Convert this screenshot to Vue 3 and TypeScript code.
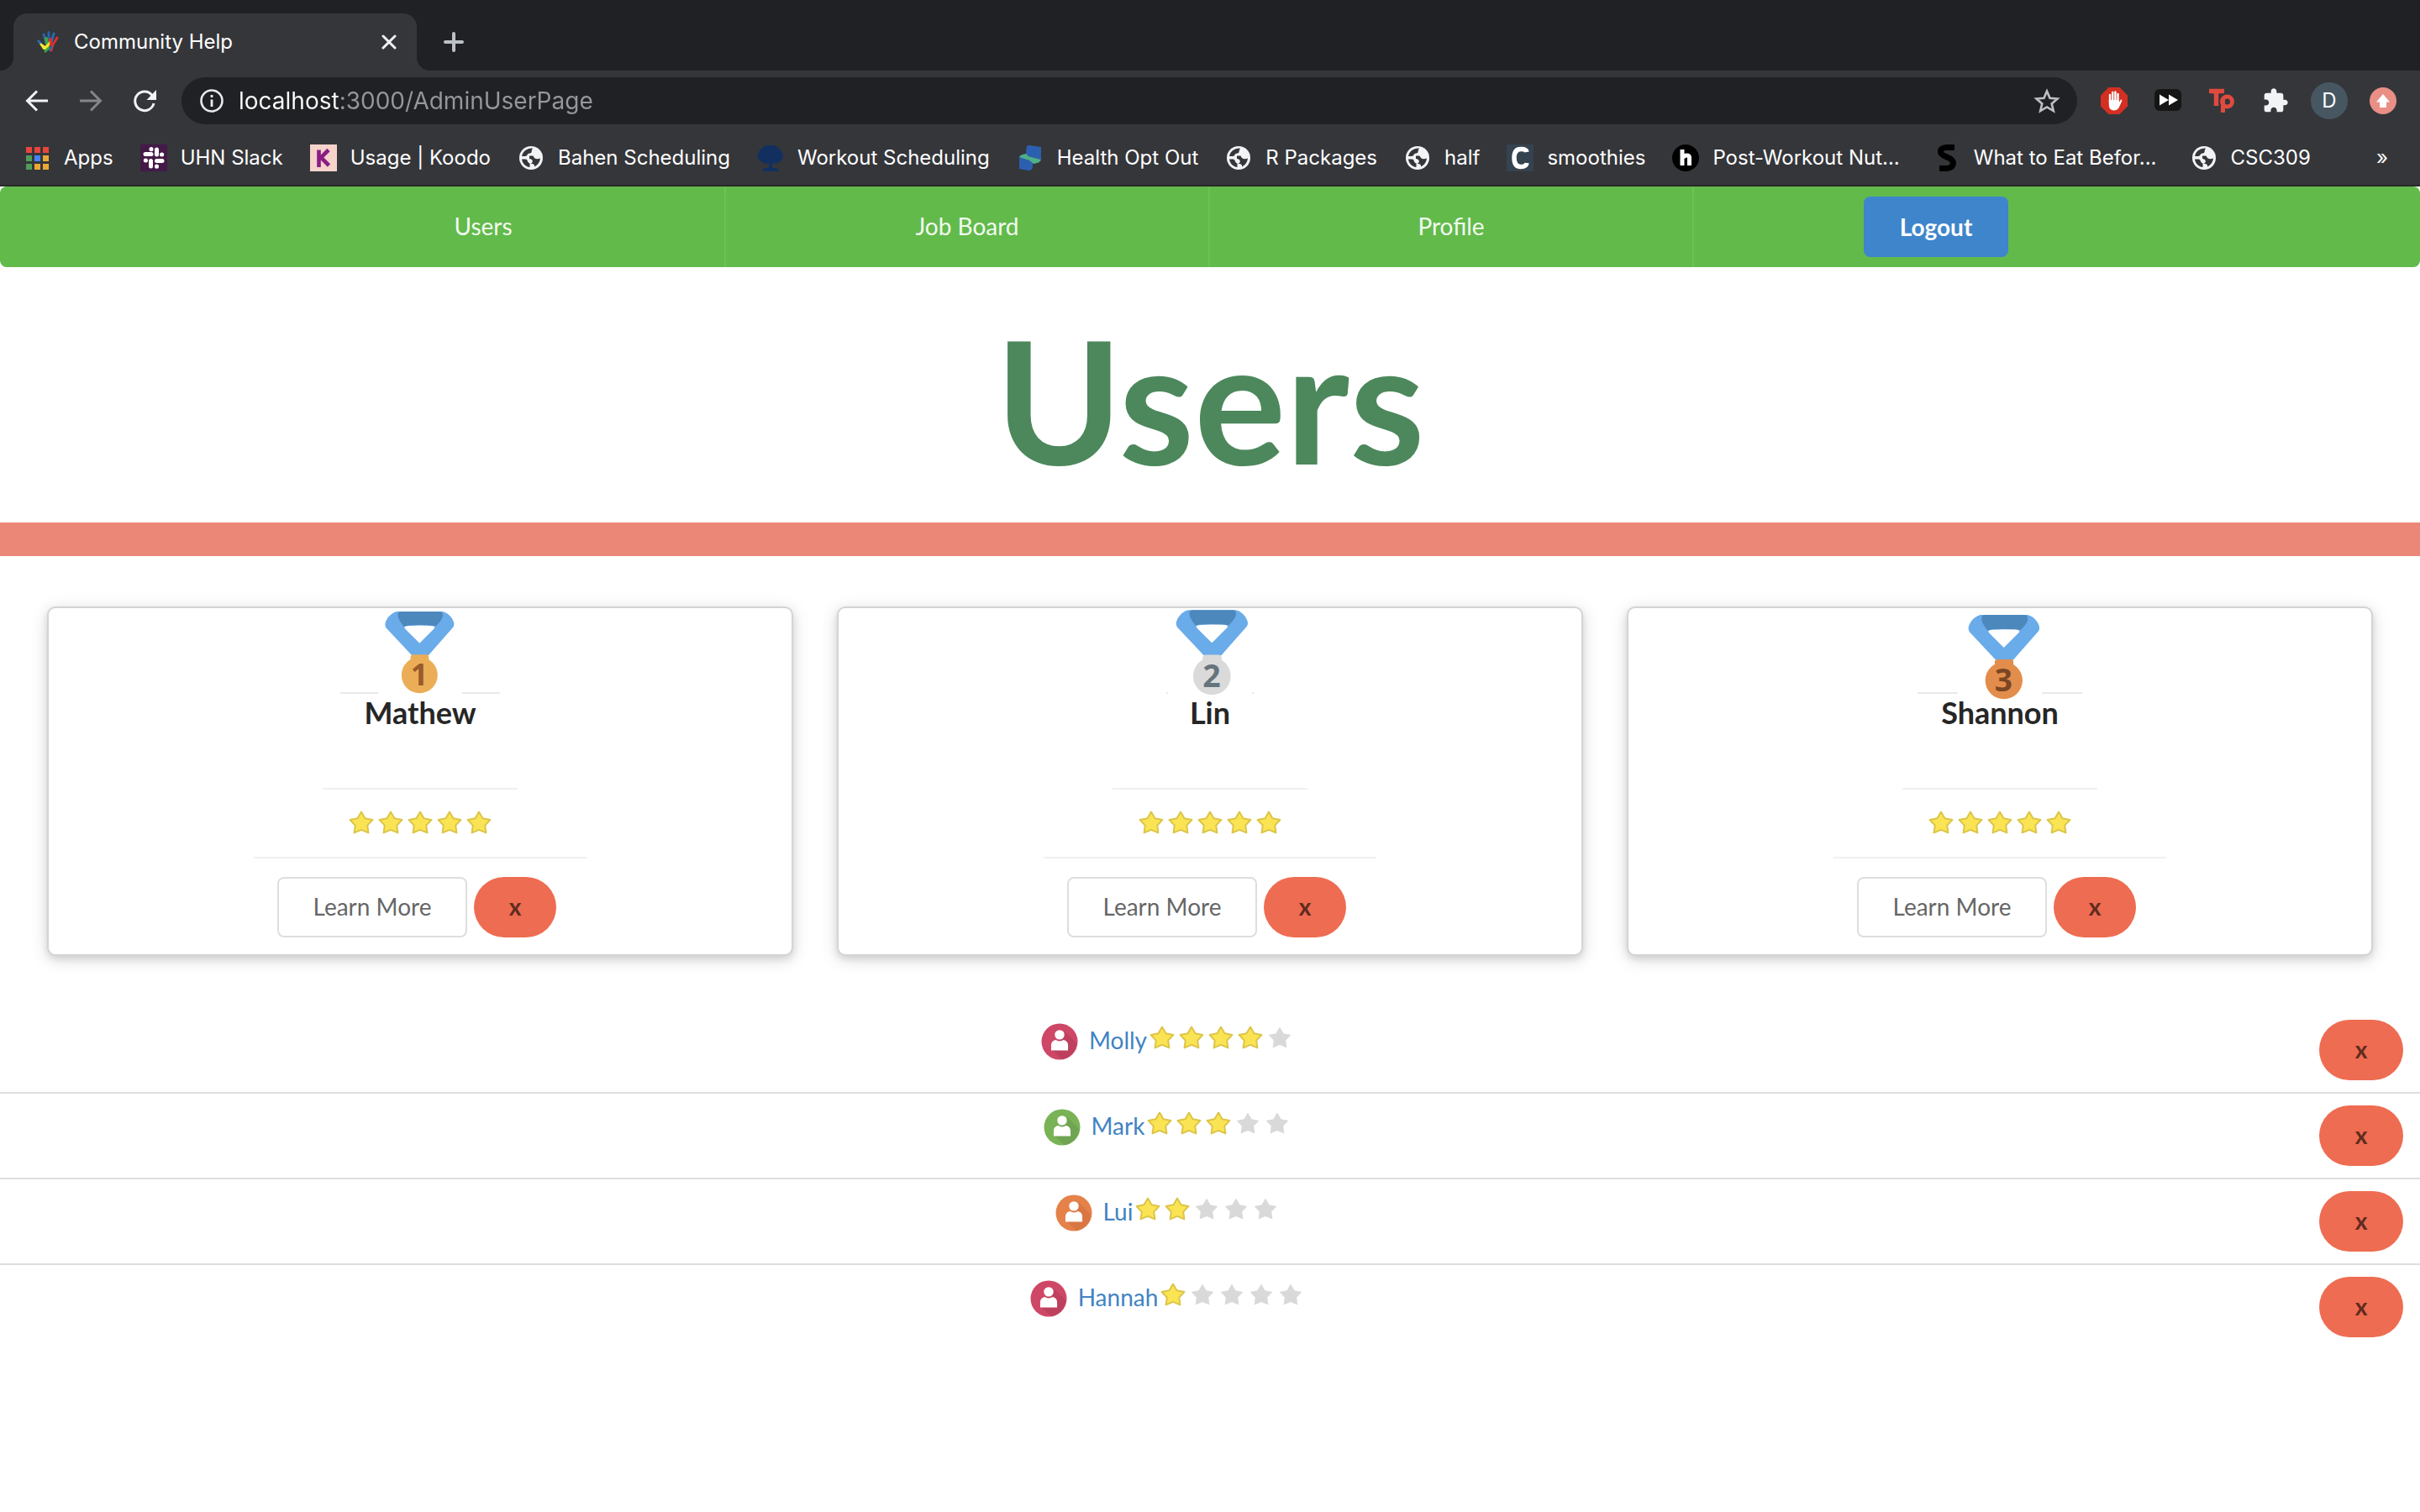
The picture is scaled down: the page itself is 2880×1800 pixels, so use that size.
<script setup lang="ts">
interface Bookmark {
  label: string
  icon: string
}

interface Leader {
  name: string
  place: number
  transform: string
  metal: string
  digit: string
}

interface Person {
  name: string
  rating: number
  color: string
  shade: string
}

const bookmarks: Bookmark[] = [
  { label: 'Apps', icon: 'apps' },
  { label: 'UHN Slack', icon: 'slack' },
  { label: 'Usage | Koodo', icon: 'koodo' },
  { label: 'Bahen Scheduling', icon: 'globe' },
  { label: 'Workout Scheduling', icon: 'tree' },
  { label: 'Health Opt Out', icon: 'health' },
  { label: 'R Packages', icon: 'globe' },
  { label: 'half', icon: 'globe' },
  { label: 'smoothies', icon: 'smoothies' },
  { label: 'Post-Workout Nut...', icon: 'post' },
  { label: 'What to Eat Befor...', icon: 'eat' },
  { label: 'CSC309', icon: 'globe' },
]

const leaders: Leader[] = [
  { name: 'Mathew', place: 1, transform: '', metal: '#ebae57', digit: '#9a5a2c' },
  { name: 'Lin', place: 2, transform: 'translate(1 -2) scale(1.04)', metal: '#dadada', digit: '#66747c' },
  { name: 'Shannon', place: 3, transform: 'translate(4 4) scale(1.03)', metal: '#e38d4c', digit: '#7a4623' },
]

const people: Person[] = [
  { name: 'Molly', rating: 4, color: '#cf4766', shade: '#bd415e' },
  { name: 'Mark', rating: 3, color: '#79b356', shade: '#6fa453' },
  { name: 'Lui', rating: 2, color: '#e4824a', shade: '#da7644' },
  { name: 'Hannah', rating: 1, color: '#cf4766', shade: '#bd415e' },
]

const starPoints =
  '15,1.6 19.5,9.2 28.4,11 22.2,17.6 23.4,26.4 15,22.9 6.6,26.4 7.8,17.6 1.6,11 10.5,9.2'
const url = 'localhost:3000/AdminUserPage'
</script>

<template>
  <div class="window">
    <header class="chrome">
      <div class="tabs">
        <div class="tab">
          <svg class="favicon" viewBox="0 0 26 26" fill="none" stroke-linecap="round">
            <path d="M2 12 L7 18" stroke="#2a6bb0" stroke-width="3" />
            <path d="M8 4 L11 14 M14 1.5 L14 13" stroke="#2465a8" stroke-width="3" />
            <path d="M20 3 L17 13" stroke="#2a6bb0" stroke-width="3" />
            <path d="M11 9 L12 15" stroke="#3fa34a" stroke-width="4" />
            <path d="M16 10 L16 16" stroke="#d6322d" stroke-width="4" />
            <path d="M24 8 L19 16 L17 23" stroke="#d6322d" stroke-width="3" />
            <path d="M4 15 L10 19 L14 15 L13 21 L8 21 Z" fill="#f3ea2c" stroke="#f3ea2c" stroke-width="2" />
            <path d="M10 24 L14 20" stroke="#3fa34a" stroke-width="3" />
            <path d="M15 23 L18 18" stroke="#2a6bb0" stroke-width="2" />
          </svg>
          <span class="tab-title">Community Help</span>
          <button class="icon-button close" aria-label="Close tab">
            <svg viewBox="0 0 18 18" stroke="#f1f3f4" stroke-width="3" stroke-linecap="round">
              <path d="M2 2 L16 16 M16 2 L2 16" />
            </svg>
          </button>
        </div>
        <button class="icon-button new-tab" aria-label="New tab">
          <svg viewBox="0 0 24 24" stroke="#bdc1c6" stroke-width="4" stroke-linecap="round">
            <path d="M12 2 V22 M2 12 H22" />
          </svg>
        </button>
      </div>

      <div class="toolbar">
        <div class="history">
          <button class="icon-button" aria-label="Back">
            <svg viewBox="0 0 32 32" fill="none" stroke="#f1f3f4" stroke-width="3">
              <path d="M29 16 H5 M16 4.5 L4.5 16 L16 27.5" />
            </svg>
          </button>
          <button class="icon-button" aria-label="Forward">
            <svg viewBox="0 0 32 32" fill="none" stroke="#858689" stroke-width="3">
              <path d="M3 16 H27 M16 4.5 L27.5 16 L16 27.5" />
            </svg>
          </button>
          <button class="icon-button" aria-label="Reload">
            <svg viewBox="0 0 32 32">
              <path d="M25 9.5 A11.3 11.3 0 1 0 27 19" fill="none" stroke="#f1f3f4" stroke-width="3" />
              <path d="M30 3 V15 H18.500 Z" fill="#f1f3f4" />
            </svg>
          </button>
        </div>
        <div class="omnibox">
          <svg class="info" viewBox="0 0 28 28" fill="none">
            <circle cx="14" cy="14" r="12.500" stroke="#e8eaed" stroke-width="2.600" />
            <path d="M14 12.500 V21 M14 7 V10" stroke="#e8eaed" stroke-width="2.800" />
          </svg>
          <input class="address" type="text" aria-label="Address" :value="url" />
          <button class="icon-button" aria-label="Bookmark this tab">
            <svg viewBox="0 0 32 32" fill="none" stroke="#bdc1c6" stroke-width="2.600">
              <path d="M16 4.500 L19.500 12.800 L28.500 13.500 L21.700 19.400 L23.800 28 L16 23.400 L8.200 28 L10.300 19.400 L3.500 13.500 L12.500 12.800 Z" />
            </svg>
          </button>
        </div>
        <div class="extensions">
          <button class="icon-button" aria-label="Ad blocker">
            <svg viewBox="0 0 32 32">
              <path d="M9.400 0 H22.600 L32 9.400 V22.600 L22.600 32 H9.400 L0 22.600 V9.400 Z" fill="#d42f22" />
              <path d="M11 9 V18 M14.200 6 V17 M17.400 5.500 V17 M20.500 8 V18" stroke="#fff" stroke-width="2.400" stroke-linecap="round" />
              <path d="M9.800 15 H21.600 L21.800 18 L24 14.500 Q26 14 25.200 16.500 L21.500 24.500 Q19.500 27.500 15.500 27.500 Q10 27 9.800 21 Z" fill="#fff" />
            </svg>
          </button>
          <button class="icon-button" aria-label="Video speed">
            <svg viewBox="0 0 32 32">
              <rect y="2" width="32" height="26" rx="6" fill="#151515" />
              <path d="M6 8.500 L17 15 L6 21.500 Z M17 8.500 L28 15 L17 21.500 Z" fill="#fff" />
            </svg>
          </button>
          <button class="icon-button" aria-label="Toolkit">
            <svg viewBox="0 0 32 32">
              <path d="M1 4.500 H19 M9.500 4.500 V22" stroke="#e04a3f" stroke-width="5.500" fill="none" />
              <path d="M17.500 30 V13" stroke="#e04a3f" stroke-width="5" />
              <circle cx="22.500" cy="17" r="6" fill="none" stroke="#e04a3f" stroke-width="5" />
            </svg>
          </button>
          <button class="icon-button" aria-label="Extensions">
            <svg viewBox="0 0 24 24">
              <path d="M20.500 11H19V7c0-1.100-.9-2-2-2h-4V3.500C13 2.120 11.880 1 10.500 1S8 2.120 8 3.500V5H4c-1.100 0-1.990.9-1.990 2v3.800H3.500c1.490 0 2.700 1.210 2.700 2.700s-1.210 2.700-2.700 2.700H2V20c0 1.100.9 2 2 2h3.800v-1.500c0-1.490 1.210-2.700 2.700-2.700 1.490 0 2.700 1.210 2.700 2.700V22H17c1.100 0 2-.9 2-2v-4h1.500c1.380 0 2.500-1.120 2.500-2.500S21.880 11 20.500 11z" fill="#f1f3f4" />
            </svg>
          </button>
          <button class="profile" aria-label="Profile D">D</button>
          <button class="icon-button" aria-label="Update browser">
            <svg viewBox="0 0 32 32">
              <circle cx="16" cy="16" r="16" fill="#e98f86" />
              <path d="M16 8 L24 17.500 H20 V24 H12 V17.500 H8 Z" fill="#fff" />
            </svg>
          </button>
        </div>
      </div>

      <nav class="bookmarks" aria-label="Bookmarks">
        <a
          v-for="mark in bookmarks"
          :key="mark.label"
          href="#"
          class="bookmark"
          :class="{ truncated: mark.label.endsWith('...') }"
        >
          <svg v-if="mark.icon === 'apps'" viewBox="0 0 32 32">
            <path d="M3 3h7v7H3z M13 3h7v7h-7z M23 3h7v7h-7z" fill="#e8453c" />
            <path d="M3 13h7v7H3z M3 23h7v7H3z" fill="#4f9d58" />
            <path d="M13 13h7v7h-7z" fill="#4285f4" />
            <path d="M23 13h7v7h-7z M13 23h7v7h-7z M23 23h7v7h-7z" fill="#e9a836" />
          </svg>
          <svg v-else-if="mark.icon === 'slack'" viewBox="0 0 32 32">
            <rect width="32" height="32" fill="#431a47" />
            <path d="M13 5.500 v.2 M13 11.500 H6 M19.500 6 V12 M25.500 12 h.2 M6.500 19 h-.2 M12.500 19.500 V26 M19.500 19.500 H26 M19.500 26 v.2" stroke="#fff" stroke-width="5" stroke-linecap="round" fill="none" />
          </svg>
          <svg v-else-if="mark.icon === 'koodo'" viewBox="0 0 32 32">
            <rect width="32" height="32" fill="#f5d3cb" />
            <path d="M10.500 6.500 V27 M22 6.500 L13 15.500 L22.500 25" stroke="#8a1d84" stroke-width="4.600" fill="none" />
          </svg>
          <svg v-else-if="mark.icon === 'globe'" viewBox="0 0 32 32">
            <circle cx="16" cy="16" r="14" fill="#f1f3f4" />
            <g fill="#35363a">
              <path d="M18 4.500 C11 4 6 8.500 5 14 H9 C12 14 11 10.500 14.500 10.500 C17.500 10.500 16 7 18 4.500 Z" />
              <path d="M14 13.500 H18.500 C19.500 17 22.500 18 27 16.500 C26.500 21 24 24.500 20 26.500 C20.500 23.500 18.500 23 15.500 23 C19.500 21 18 17.500 14 17 Z" />
              <path d="M5 17.500 H9.500 C12.500 17.500 11 21.500 14.500 22.500 V27 C9.500 26.500 5.500 22.500 5 17.500 Z" />
            </g>
          </svg>
          <svg v-else-if="mark.icon === 'tree'" viewBox="0 0 32 32" fill="#12305f">
            <path d="M11 1 H21 L25 4 L29 8 L31 13 L30 18 L25 22 L18 23 V28 H24 L26 32 H6 L8 28 H14 V23 L7 22 L2 18 L0 13 L3 7 L7 3 Z" />
          </svg>
          <svg v-else-if="mark.icon === 'health'" viewBox="0 0 32 32">
            <path d="M12 2 Q13 .5 15 1 L29 3 V18 L11 13 V8 Z" fill="#2b5faf" />
            <path d="M3 14 L19 21 V27 Q18 31 14 31 L3 29 Z" fill="#2b5faf" />
            <path d="M3 15 Q4 12 11 11 L14 14 L29 18 Q28 22 20 23 L15 19 Z" fill="#4fae8c" />
          </svg>
          <svg v-else-if="mark.icon === 'smoothies'" viewBox="0 0 32 32">
            <rect width="32" height="32" fill="#34434f" />
            <path d="M24 9 Q23.500 5.500 17 5.500 Q9 5.500 9 16 Q9 26.500 17 26.500 Q23.500 26.500 24 22" stroke="#fff" stroke-width="5.500" fill="none" />
          </svg>
          <svg v-else-if="mark.icon === 'post'" viewBox="0 0 32 32">
            <circle cx="16" cy="16" r="16" fill="#000" />
            <path d="M12 6 V25 M20.500 25 V16 Q20.500 13 17.500 13 Q14 13 13 16" stroke="#fff" stroke-width="5" fill="none" />
          </svg>
          <svg v-else viewBox="0 0 32 32">
            <path d="M25 3.500 H16 Q8 4 8.500 9 Q9 12 15 14.500 Q23.500 18 23.500 22 Q23 28 16 28.500 H7" stroke="#000" stroke-width="7" fill="none" />
          </svg>
          <span>{{ mark.label }}</span>
        </a>
        <button class="overflow" aria-label="More bookmarks">»</button>
      </nav>
    </header>

    <nav class="menu" aria-label="Main">
      <a href="#" class="menu-item">Users</a>
      <a href="#" class="menu-item">Job Board</a>
      <a href="#" class="menu-item">Profile</a>
      <div class="menu-item"><button class="logout">Logout</button></div>
    </nav>

    <main>
      <h1>Users</h1>
      <div class="band"></div>

      <section class="cards" aria-label="Top users">
        <article v-for="leader in leaders" :key="leader.name" class="card">
          <div class="medal">
            <svg viewBox="0 0 100 112" role="img" :aria-label="`Place ${leader.place}`">
              <g :transform="leader.transform">
                <path d="M22 4 H77 C84 6 89 12 90.300 18 Q90.700 21 89 23 L60 56 H40 L9.500 23.500 Q8 21 8.500 18 C10 12 14.500 6.500 22 4 Z" fill="#6aabe9" />
                <path d="M26 4 H74 Q77 5 77 9 C76 14 72 18 68 22 Q67 20.800 62 20.500 H37 Q32 20.800 31 22.500 C27 17 23.500 13 23.500 8 Q23.500 5 26 4 Z" fill="#4d88bd" />
                <path d="M31 22.300 Q34 20.600 49.300 20.600 Q65 20.600 67.500 22 L66.500 24.500 L49.300 41.700 L32.500 25 Z" fill="#fff" />
                <rect x="38.700" y="55.300" width="21.600" height="16" rx="3" :fill="leader.metal" />
                <circle cx="49.300" cy="79.700" r="21.500" :fill="leader.metal" />
                <text x="49" y="92" text-anchor="middle" :fill="leader.digit">{{ leader.place }}</text>
              </g>
            </svg>
          </div>
          <h2>{{ leader.name }}</h2>
          <div class="rating" role="img" aria-label="5 out of 5 stars">
            <svg v-for="n in 5" :key="n" class="star on" viewBox="0 0 30 28">
              <polygon :points="starPoints" />
            </svg>
          </div>
          <div class="actions">
            <button class="learn">Learn More</button>
            <button class="remove" :aria-label="`Remove ${leader.name}`">x</button>
          </div>
        </article>
      </section>

      <ul class="people">
        <li v-for="person in people" :key="person.name">
          <div class="person">
            <svg class="avatar" viewBox="0 0 46 46" aria-hidden="true">
              <circle cx="23" cy="23" r="22.500" :fill="person.color" />
              <path d="M29 10 L44 25 A22 22 0 0 1 26 45 L13 33 Z" :fill="person.shade" />
              <circle cx="23" cy="14.500" r="6" fill="#fff" />
              <path d="M12.500 34 V27 Q13 22 18 21 Q23 24 28 21 Q33 22 33.500 27 V34 Z" fill="#fff" />
            </svg>
            <a href="#">{{ person.name }}</a>
            <div class="rating" role="img" :aria-label="`${person.rating} out of 5 stars`">
              <svg
                v-for="n in 5"
                :key="n"
                class="star"
                :class="{ on: n <= person.rating }"
                viewBox="0 0 30 28"
              >
                <polygon :points="starPoints" />
              </svg>
            </div>
          </div>
          <button class="remove" :aria-label="`Remove ${person.name}`">x</button>
        </li>
      </ul>
    </main>
  </div>
</template>

<style>
body {
  margin: 0;
  background: #fff;
}
</style>

<style scoped>
.window {
  font-family: Lato, sans-serif;
  font-size: 28px;
  line-height: 40px;
  color: #262626;
}

button {
  font: inherit;
  border: 0;
  padding: 0;
  margin: 0;
  background: none;
  color: inherit;
  cursor: pointer;
}

a {
  text-decoration: none;
}

svg {
  display: block;
  flex: none;
}

.icon-button {
  flex: none;
  width: 32px;
  height: 32px;
}

.icon-button svg {
  width: 100%;
  height: 100%;
}

/* Browser frame */
.chrome {
  font-family: Inter, sans-serif;
  font-size: 24px;
  line-height: 32px;
  color: #fff;
  background: #35363a;
  border-bottom: 2px solid #282828;
}

.tabs {
  display: flex;
  align-items: flex-end;
  height: 84px;
  padding: 0 16px;
  background: #202124;
}

.tab {
  position: relative;
  box-sizing: border-box;
  display: flex;
  align-items: center;
  width: 480px;
  height: 68px;
  padding: 0 24px 0 28px;
  border-radius: 16px 16px 0 0;
  background: #35363a;
}

.tab::before,
.tab::after {
  content: '';
  position: absolute;
  bottom: 0;
  width: 16px;
  height: 16px;
}

.tab::before {
  right: 100%;
  background: radial-gradient(circle at 0 0, transparent 16px, #35363a 16px);
}

.tab::after {
  left: 100%;
  background: radial-gradient(circle at 100% 0, transparent 16px, #35363a 16px);
}

.favicon {
  width: 26px;
  height: 26px;
}

.tab-title {
  flex: 1;
  margin-left: 18px;
}

.close {
  width: 18px;
  height: 18px;
}

.new-tab {
  width: 24px;
  height: 24px;
  margin: 0 0 22px 32px;
}

.toolbar {
  display: flex;
  align-items: center;
  gap: 28px;
  height: 72px;
  padding: 0 28px;
}

.history {
  display: flex;
  gap: 32px;
}

.omnibox {
  flex: 1;
  box-sizing: border-box;
  display: flex;
  align-items: center;
  height: 56px;
  padding: 0 20px 0 22px;
  border-radius: 28px;
  background: #202124;
}

.info {
  width: 28px;
  height: 28px;
}

.address {
  flex: 1;
  min-width: 0;
  height: 40px;
  margin: 0 18px;
  padding: 0;
  border: 0;
  font: 28px/40px Inter, sans-serif;
  color: transparent;
  background: linear-gradient(90deg, #fff 119px, #96979a 119px);
  background-clip: text;
  -webkit-background-clip: text;
}

.extensions {
  display: flex;
  align-items: center;
  gap: 32px;
}

.profile {
  width: 44px;
  height: 44px;
  margin: 0 -6px;
  border-radius: 22px;
  background: #475762;
  font-size: 24px;
}

.bookmarks {
  display: flex;
  align-items: center;
  gap: 32px;
  height: 64px;
  padding: 0 28px;
}

.bookmark {
  display: flex;
  align-items: center;
  gap: 16px;
  color: #fff;
  white-space: nowrap;
}

.bookmark.truncated {
  padding-right: 8px;
}

.bookmark svg {
  width: 32px;
  height: 32px;
}

.overflow {
  margin-left: auto;
  padding: 0 10px;
}

/* Site menu */
.menu {
  display: flex;
  justify-content: center;
  height: 96px;
  border-radius: 8px;
  background: #62ba4b;
}

.menu-item {
  box-sizing: border-box;
  display: flex;
  align-items: center;
  justify-content: center;
  width: 20%;
  color: #f2faf0;
}

.menu-item:not(:last-child) {
  padding-bottom: 2px;
  border-right: 2px solid #6dbf58;
}

.logout {
  width: 172px;
  height: 72px;
  border-radius: 8px;
  background: #3e85cb;
  color: #fff;
  font-weight: 700;
}

h1 {
  margin: 28px 0 20px;
  font-size: 204px;
  line-height: 256px;
  font-weight: 700;
  text-align: center;
  color: #4c885c;
}

.band {
  height: 40px;
  background: #eb8777;
}

/* Leader cards */
.cards {
  display: grid;
  grid-template-columns: repeat(3, 1fr);
  gap: 52px;
  padding: 60px 56px 62px;
}

.card {
  display: flex;
  flex-direction: column;
  align-items: center;
  padding-bottom: 20px;
  border: 2px solid #d4d4d5;
  border-radius: 10px;
  background: #fff;
  box-shadow: 0 4px 8px rgba(34, 36, 38, 0.12), 0 4px 20px rgba(34, 36, 38, 0.15);
}

.medal {
  position: relative;
  width: 100px;
  height: 102px;
  margin-bottom: -2px;
  background: #fff;
}

.medal svg {
  width: 100px;
  height: 112px;
}

.medal text {
  font: 700 36px 'Open Sans', sans-serif;
}

h2 {
  margin: 0 0 68px;
  padding: 0 28px;
  border-top: 2px solid #e9e9e9;
  font-size: 36px;
  line-height: 44px;
  font-weight: 700;
}

.rating {
  display: flex;
  gap: 5px;
}

.star {
  width: 30px;
  height: 28px;
  fill: #d9d9d9;
}

.star.on {
  fill: #fbe453;
  stroke: #dcc548;
  stroke-width: 2;
  stroke-linejoin: round;
}

.card .rating {
  padding: 25px 31px 27px;
  border-top: 2px solid #f0f0f0;
}

.actions {
  display: flex;
  gap: 8px;
  padding: 22px 36px 0 28px;
  border-top: 2px solid #f0f0f0;
}

.learn {
  box-sizing: border-box;
  width: 226px;
  height: 72px;
  padding-bottom: 2px;
  border: 2px solid #dededf;
  border-radius: 8px;
  color: #666;
}

.remove {
  flex: none;
  width: 98px;
  height: 72px;
  padding-bottom: 2px;
  border-radius: 36px;
  background: #ee6c51;
  color: #5f2b20;
  font-weight: 700;
}

/* Remaining users */
.people {
  margin: 0;
  padding: 0;
  list-style: none;
}

.people li {
  display: flex;
  align-items: center;
  height: 100px;
  padding-right: 20px;
}

.people li + li {
  border-top: 2px solid #dedede;
}

.people .remove {
  width: 100px;
}

.person {
  flex: 1;
  display: flex;
  align-items: center;
  justify-content: center;
  padding-bottom: 24px;
}

.person a {
  color: #4183c4;
}

.avatar {
  width: 46px;
  height: 44px;
  margin: 4px 12px 0 18px;
}

.person .rating {
  padding: 0 2px 6px 3px;
}
</style>
